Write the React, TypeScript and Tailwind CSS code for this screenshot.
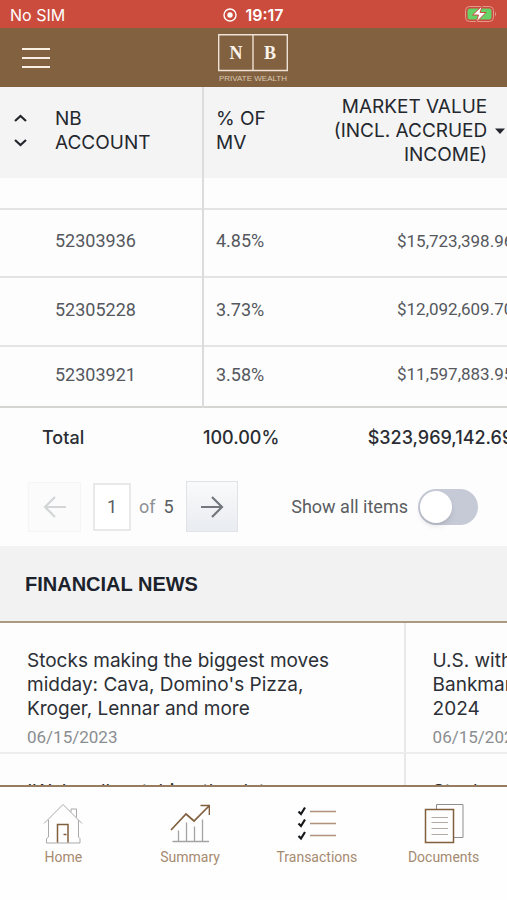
import React from 'react'

const rows = [
    { account: "52303936", percent: "4.85%", value: "$15,723,398.96", height: "h-[68px]" },
    { account: "52305228", percent: "3.73%", value: "$12,092,609.70", height: "h-[69px]" },
    { account: "52303921", percent: "3.58%", value: "$11,597,883.95", height: "h-[61px]" }
]

const news = [
    [
        { title: ["Stocks making the biggest moves", "midday: Cava, Domino's Pizza,", "Kroger, Lennar and more"], date: "06/15/2023" },
        { title: ["U.S. withdraws some charges", "Bankman-Fried faces until", "2024"], date: "06/15/2023" }
    ],
    [
        { title: ["'We're all watching the data"], date: "06/15/2023" },
        { title: ["Stocks close higher"], date: "06/15/2023" }
    ]
]

const HomeIcon = () => (
    <svg width="40" height="42" viewBox="0 0 40 42" fill="none" aria-hidden="true">
        <g stroke="#aaa9a8" strokeWidth="1">
            <path d="M1 20.500L20 1.500L39 20.500" />
            <path d="M28 9V6H33.500V14.500" />
            <path d="M5.500 17V34L3.500 35.500V40H37V35.500L35.500 34V17" />
        </g>
        <path d="M14.500 39.500V21.500H25V39.500M20.500 31.500H23.500" stroke="#805f3e" strokeWidth="1.500" />
    </svg>
)

const SummaryIcon = () => (
    <svg width="40" height="42" viewBox="0 0 40 42" fill="none" aria-hidden="true">
        <path d="M2.500 38.500H39M8.500 38V27.500M16.500 38V19.500M24.500 38V23.500M32.500 38V16.500" stroke="#a3a3a5" strokeWidth="1.300" />
        <path d="M1 27L16 11L24 18L39 3M30.500 2.500H39.500V12" stroke="#80603e" strokeWidth="1.700" />
    </svg>
)

const TransactionsIcon = () => (
    <svg width="40" height="42" viewBox="0 0 40 42" fill="none" aria-hidden="true">
        <path d="M1.500 8.500L4 11L8 4.500M1.500 20.500L4 23L8 16.500M1.500 33L4 35.500L8 29" stroke="#16181a" strokeWidth="2.200" />
        <path d="M13 8.500H39M13 20.500H39M13 32.500H39" stroke="#b0937a" strokeWidth="1.300" />
    </svg>
)

const DocumentsIcon = () => (
    <svg width="40" height="42" viewBox="0 0 40 42" fill="none" aria-hidden="true">
        <path d="M12.500 6V1.500H39V34.500H30" stroke="#8f8f90" strokeWidth="1" />
        <rect x="1.500" y="6.500" width="28" height="33" stroke="#80603e" strokeWidth="1.500" />
        <path d="M7.500 14.500H24M7.500 19.500H24M7.500 25.500H24M7.500 31.500H24" stroke="#b3aca6" strokeWidth="1" />
    </svg>
)

const tabs = [
    { label: "Home", icon: <HomeIcon /> },
    { label: "Summary", icon: <SummaryIcon /> },
    { label: "Transactions", icon: <TransactionsIcon /> },
    { label: "Documents", icon: <DocumentsIcon /> }
]

const StatusBar = () => (
    <div className="grid h-7 shrink-0 grid-cols-3 items-center bg-[#cb4b3d] px-2.5 text-base text-white">
        <span className="pt-0.5">No SIM</span>
        <span className="flex items-center justify-center gap-2 pt-0.5 font-semibold">
            <svg width="14" height="14" viewBox="0 0 14 14" aria-hidden="true">
                <circle cx="7" cy="7" r="6" fill="none" stroke="#fff" strokeWidth="1.400" />
                <circle cx="7" cy="7" r="2.700" fill="#fff" />
            </svg>
            19:17
        </span>
        <svg className="justify-self-end" width="32" height="18" viewBox="0 0 32 18" role="img" aria-label="Battery charging">
            <rect x="0.500" y="1.500" width="28" height="15" rx="4" fill="none" stroke="#e39a8d" />
            <rect x="2.500" y="3.500" width="24" height="11" rx="2.500" fill="#65d167" />
            <path d="M30 6.500Q32 9 30 11.500Z" fill="#e39a8d" />
            <path d="M17.500 0.500L7.500 10H13.500L11 17.500L21 7.500H15Z" fill="#fff" stroke="#cb4b3d" strokeWidth="1" />
        </svg>
    </div>
)

const Header = () => (
    <header className="grid h-[59px] shrink-0 grid-cols-3 items-center bg-[#81613f] px-[22px]">
        <button type="button" aria-label="Open menu" className="flex w-7 flex-col gap-[7px]">
            <span className="h-0.5 bg-[#f8eee4]"></span>
            <span className="h-0.5 bg-[#f8eee4]"></span>
            <span className="h-0.5 bg-[#f8eee4]"></span>
        </button>
        <svg className="justify-self-center" width="70" height="48" viewBox="0 0 70 48" role="img" aria-label="NB Private Wealth">
            <path d="M0.700 0.700H69.300V36.500H0.700ZM35 0.700V36.500" fill="none" stroke="#eee2d6" strokeWidth="1.400" />
            <g fill="#fbf3ea" textAnchor="middle" fontFamily="'Liberation Serif', serif">
                <text x="18" y="25" fontSize="18" fontWeight="bold">N</text>
                <text x="52" y="25" fontSize="18" fontWeight="bold">B</text>
                <text x="35" y="47" fontSize="8" fontFamily="'Liberation Sans', sans-serif" fill="#dcc9b5">PRIVATE WEALTH</text>
            </g>
        </svg>
    </header>
)

const Holdings = () => (
    <table className="w-[104%] table-fixed border-collapse text-left text-lg">
        <thead className="bg-[#f4f4f5] text-[19px] leading-6 text-[#24282e]">
            <tr className="h-[91px]">
                <th className="w-[203px] border-r-2 border-[#dcdcde] font-normal">
                    <div className="flex items-center pb-1">
                        <button type="button" aria-label="Sort by account" className="ml-3.5 mr-7">
                            <svg width="13" height="35" viewBox="0 0 13 35" fill="none" stroke="#24282e" strokeWidth="2.200" aria-hidden="true">
                                <path d="M1 8L6.500 3L12 8M1 27L6.500 32L12 27" />
                            </svg>
                        </button>
                        <span>NB<br />ACCOUNT</span>
                    </div>
                </th>
                <th className="w-[90px] pb-1 pl-3 font-normal"><span>% OF<br />MV</span></th>
                <th className="pr-[22px] font-normal">
                    <div className="flex items-center justify-end gap-2 pb-1 text-right">
                        <span>MARKET VALUE<br />(INCL. ACCRUED<br />INCOME)</span>
                        <svg width="10" height="6" viewBox="0 0 10 6" fill="#24282e" aria-hidden="true">
                            <path d="M0 0.500H10L5 6Z" />
                        </svg>
                    </div>
                </th>
            </tr>
        </thead>
        <tbody className="font-['Roboto','Liberation_Sans',sans-serif] text-[#55585d]">
            <tr className="h-[31px] border-b-2 border-[#e4e4e5]">
                <td className="border-r-2 border-[#dcdcde]"></td>
                <td></td>
                <td></td>
            </tr>
            {
                rows.map((row) => (
                    <tr key={row.account} className={`${row.height} border-b-2 border-[#e4e4e5] last:border-[#d7d5d2]`}>
                        <td className="border-r-2 border-[#dcdcde] pb-1 pl-[55px]">{row.account}</td>
                        <td className="pb-1 pl-3">{row.percent}</td>
                        <td className="pb-1 pr-3.5 text-right text-[17px]">{row.value}</td>
                    </tr>
                ))
            }
        </tbody>
        <tfoot className="text-lg font-medium text-[#2a2d33]">
            <tr className="h-[60px]">
                <td className="pl-[42px]">Total</td>
                <td>100.00%</td>
                <td className="pr-3.5 text-right">$323,969,142.69</td>
            </tr>
        </tfoot>
    </table>
)

const Pagination = () => (
    <div className="flex items-center justify-between pb-3.5 pl-7 pr-[29px] pt-3.5 font-['Roboto','Liberation_Sans',sans-serif] text-lg text-[#5a5d62]">
        <div className="flex items-center">
            <button type="button" disabled aria-label="Previous page" className="flex h-[50px] w-[53px] items-center justify-center border border-[#f5f5f5] bg-[#fbfbfb]">
                <svg width="24" height="22" viewBox="0 0 24 22" fill="none" stroke="#d3d5d7" strokeWidth="2.200" aria-hidden="true">
                    <path d="M23 11H2M12 1L2 11L12 21" />
                </svg>
            </button>
            <input aria-label="Page" defaultValue="1" className="ml-3 h-12 w-[38px] border-2 border-[#e8e9ea] bg-white text-center" />
            <span className="ml-2 text-[#8d9094]">of</span>
            <span className="ml-2">5</span>
            <button type="button" aria-label="Next page" className="ml-3 flex h-[51px] w-[52px] items-center justify-center border border-[#dfe2e6] bg-linear-to-b from-[#fafafb] to-[#e9ecf0]">
                <svg width="24" height="22" viewBox="0 0 24 22" fill="none" stroke="#73787e" strokeWidth="2.200" aria-hidden="true">
                    <path d="M1 11H22M12 1L22 11L12 21" />
                </svg>
            </button>
        </div>
        <label className="flex items-center gap-2.5">
            Show all items
            <input
                type="checkbox"
                role="switch"
                className="h-9 w-[60px] appearance-none rounded-full bg-[#c5cad6] p-0.5 before:block before:size-8 before:rounded-full before:bg-white before:shadow-md checked:bg-[#81613f] checked:before:ml-6"
            />
        </label>
    </div>
)

const News = () => (
    <section>
        <h2 className="border-b-2 border-[#ab9983] bg-[#f2f2f3] px-[25px] pb-[25px] pt-[26px] font-['Liberation_Sans',Arial,sans-serif] text-xl leading-6 font-bold text-[#1c222b]">FINANCIAL NEWS</h2>
        {
            news.map((line, i) => (
                <div key={i} className="flex border-b-2 border-[#ededee]">
                    {
                        line.map((item) => (
                            <article key={item.title[0]} className="w-4/5 shrink-0 border-r-2 border-[#e8e8ea] px-[27px] pb-[3px] pt-[26px] leading-6 whitespace-nowrap">
                                <a href="#news" className="text-[19px] text-[#2c3036]">
                                    {item.title.map((text) => <span key={text} className="block">{text}</span>)}
                                </a>
                                <p className="pt-1 font-['Roboto','Liberation_Sans',sans-serif] text-[17px] leading-6 text-[#8a8d91]">{item.date}</p>
                            </article>
                        ))
                    }
                </div>
            ))
        }
    </section>
)

const TabBar = () => (
    <nav className="grid h-[115px] shrink-0 grid-cols-4 border-t-2 border-[#987c5f] bg-[#fefefe] pt-4">
        {
            tabs.map((tab) => (
                <a key={tab.label} href={`#${tab.label.toLowerCase()}`} className="flex flex-col items-center font-['Roboto','Liberation_Sans',sans-serif] text-sm leading-6 text-[#a58a70]">
                    {tab.icon}
                    {tab.label}
                </a>
            ))
        }
    </nav>
)

const App = () => {
    return (
        <div className="flex h-screen w-full flex-col overflow-hidden bg-[#fdfdfd] font-['Inter','Liberation_Sans',sans-serif]">
            <StatusBar />
            <Header />
            <main className="min-h-0 flex-1 overflow-hidden">
                <Holdings />
                <Pagination />
                <News />
            </main>
            <TabBar />
        </div>
    )
}

export default App
